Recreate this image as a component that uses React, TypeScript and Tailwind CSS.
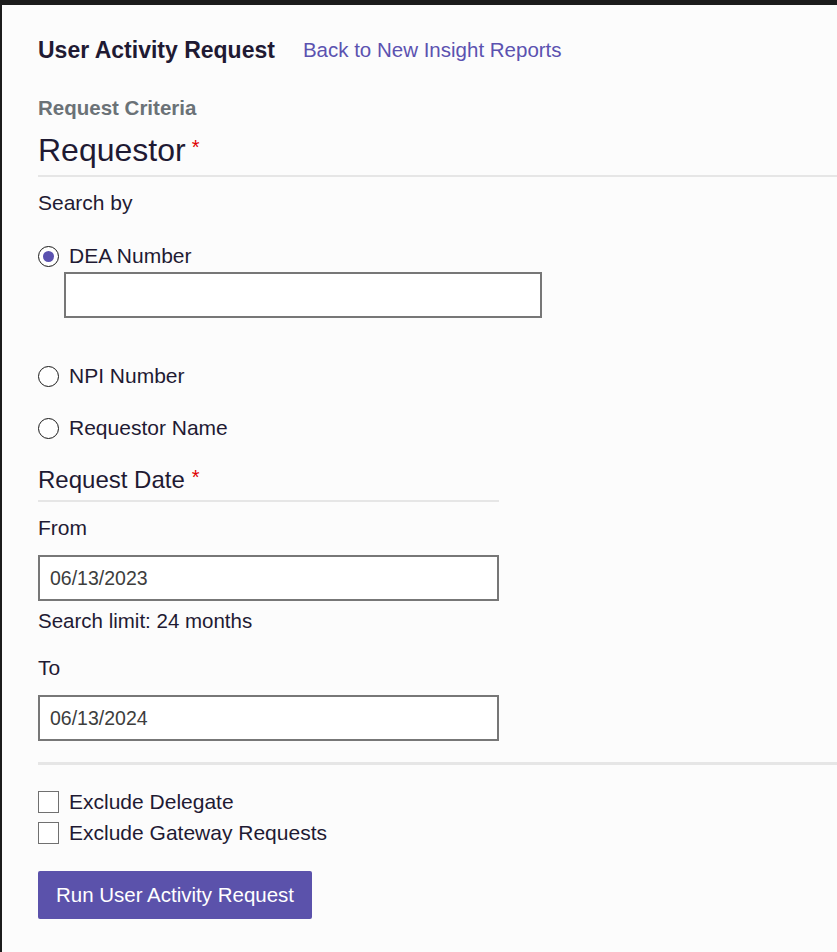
import { useState } from 'react';

function Radio({ checked, label, onClick }: { checked: boolean; label: string; onClick: () => void }) {
    return (
        <label className="flex h-[24px] items-center gap-[10px] cursor-pointer leading-[24px]" onClick={onClick}>
            <span className="flex h-[21px] w-[21px] items-center justify-center rounded-full border-[1.5px] border-[#1a1a1a] bg-white">
                {checked && <span className="h-[11px] w-[11px] rounded-full bg-[#5b52b0]" />}
            </span>
            <span>{label}</span>
        </label>
    );
}

function Checkbox({ label }: { label: string }) {
    return (
        <label className="flex h-[24px] items-center gap-[10px] cursor-pointer leading-[24px]">
            <span className="h-[22px] w-[21px] border-[1.5px] border-[#707070] bg-white" />
            <span>{label}</span>
        </label>
    );
}

export default function App() {
    const [searchBy, setSearchBy] = useState('dea');

    return (
        <div className="min-h-[952px] border-t-[5px] border-l-2 border-[#1c1c1c] bg-[#fcfcfc] font-['Liberation_Sans',Arial,sans-serif] text-[21px] text-[#1f1a33]">
            <div className="pl-[36px] pt-[30px]">
                <div className="flex h-[30px] items-center gap-[28px] leading-[30px]">
                    <h1 className="text-[23px] font-bold">User Activity Request</h1>
                    <a className="text-[20.5px] text-[#5b52b0]">Back to New Insight Reports</a>
                </div>

                <h2 className="mt-[31px] text-[20.5px] font-bold leading-[24px] text-[#6b7277]">Request Criteria</h2>

                <div className="mt-[12px] flex items-start border-b-2 border-[#e6e6e6] pb-[7px]">
                    <span className="text-[32px] leading-[36px]">Requestor</span>
                    <span className="ml-[6px] mt-[3px] text-[20px] leading-[24px] text-[#e00000]">*</span>
                </div>

                <p className="mt-[13px] leading-[26px]">Search by</p>

                <div className="mt-[28px]">
                    <Radio checked={searchBy === 'dea'} label="DEA Number" onClick={() => setSearchBy('dea')} />
                    <input className="ml-[26px] mt-[4px] block h-[46px] w-[478px] border-2 border-[#777777] bg-white px-3 outline-none" />
                </div>

                <div className="mt-[46px] flex flex-col gap-[28px]">
                    <Radio checked={searchBy === 'npi'} label="NPI Number" onClick={() => setSearchBy('npi')} />
                    <Radio checked={searchBy === 'name'} label="Requestor Name" onClick={() => setSearchBy('name')} />
                </div>

                <div className="mt-[26px] w-[461px]">
                    <div className="flex items-start border-b-2 border-[#e6e6e6] pb-[6px]">
                        <span className="text-[24px] leading-[28px]">Request Date</span>
                        <span className="ml-[7px] text-[20px] leading-[22px] text-[#e00000]">*</span>
                    </div>

                    <p className="mt-[13px] leading-[26px]">From</p>
                    <input
                        defaultValue="06/13/2023"
                        className="mt-[14px] block h-[46px] w-full border-2 border-[#777777] bg-white px-[10px] text-[19.5px] text-[#3d3d3d] outline-none"
                    />
                    <p className="mt-[7px] text-[20.5px] leading-[26px]">Search limit: 24 months</p>

                    <p className="mt-[21px] leading-[26px]">To</p>
                    <input
                        defaultValue="06/13/2024"
                        className="mt-[14px] block h-[46px] w-full border-2 border-[#777777] bg-white px-[10px] text-[19.5px] text-[#3d3d3d] outline-none"
                    />
                </div>

                <div className="mt-[21px] border-t-[3px] border-[#e6e6e6]" />

                <div className="mt-[25px] flex flex-col gap-[7px]">
                    <Checkbox label="Exclude Delegate" />
                    <Checkbox label="Exclude Gateway Requests" />
                </div>

                <button className="mt-[26px] h-[48px] w-[274px] rounded-[2px] bg-[#5b52ab] text-[20.5px] text-white">
                    Run User Activity Request
                </button>
            </div>
        </div>
    );
}
